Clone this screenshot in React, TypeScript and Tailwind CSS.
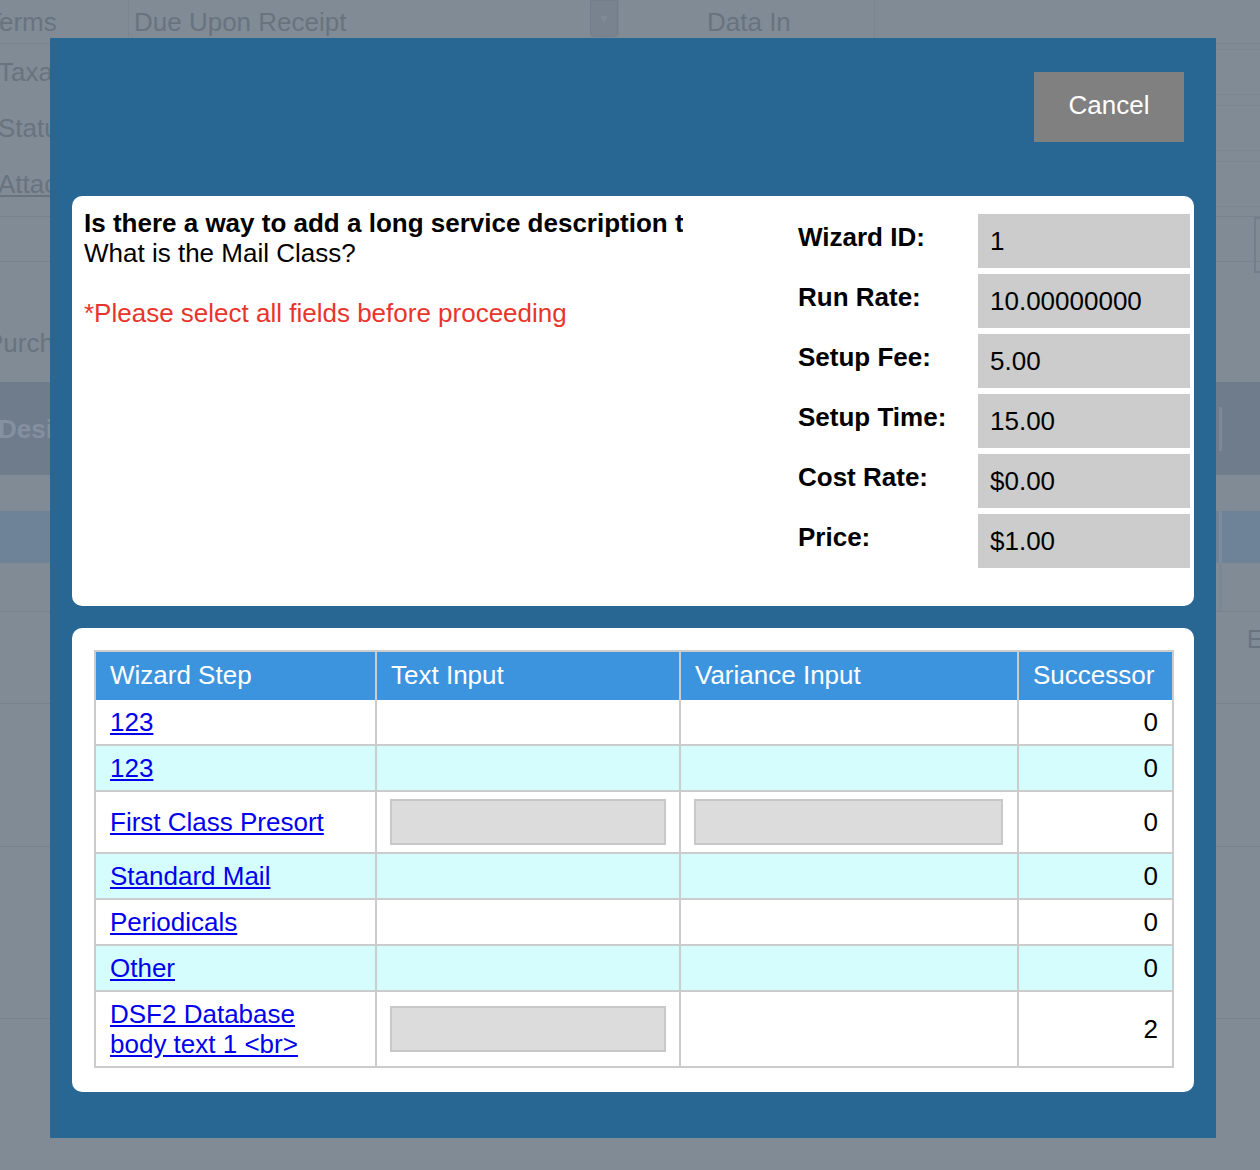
import React from "react";

const fields: [string, string][] = [
  ["Wizard ID:", "1"],
  ["Run Rate:", "10.00000000"],
  ["Setup Fee:", "5.00"],
  ["Setup Time:", "15.00"],
  ["Cost Rate:", "$0.00"],
  ["Price:", "$1.00"],
];

type Row = { step: string[]; text: boolean; variance: boolean; succ: string; cyan: boolean };

const rows: Row[] = [
  { step: ["123"], text: false, variance: false, succ: "0", cyan: false },
  { step: ["123"], text: false, variance: false, succ: "0", cyan: true },
  { step: ["First Class Presort"], text: true, variance: true, succ: "0", cyan: false },
  { step: ["Standard Mail"], text: false, variance: false, succ: "0", cyan: true },
  { step: ["Periodicals"], text: false, variance: false, succ: "0", cyan: false },
  { step: ["Other"], text: false, variance: false, succ: "0", cyan: true },
  { step: ["DSF2 Database", "body text 1 <br>"], text: true, variance: false, succ: "2", cyan: false },
];

function GrayInput() {
  return <div className="h-[46px] w-full bg-[#dcdcdc] border-2 border-[#c8c8c8]" />;
}

function Background() {
  return (
    <div className="flex flex-col text-[26px] leading-[30px] text-[#69737e]">
      <div className="h-[44px] flex items-stretch border-b border-[#7a8590]">
        <div className="w-[142px] flex items-center -ml-[14px]">Terms</div>
        <div className="w-[490px] flex items-stretch border-l border-[#7a8590]">
          <span className="flex-1 pl-[5px] flex items-center">Due Upon Receipt</span>
          <div className="w-[28px] h-[37px] bg-[#78838f] rounded-b-[4px] border border-[#737e8a] flex items-start justify-center pt-[12px] text-[12px] leading-[12px] text-[#808b96]">▼</div>
        </div>
        <div className="w-[257px] border-x border-[#7a8590] flex items-center pl-[88px]">Data In</div>
        <div className="flex-1" />
      </div>
      {["Taxable", "Status", "Attachments"].map((t, i) => (
        <div key={t} className="h-[56px] flex items-center">
          <div className={"flex-1 -ml-[2px] " + (i === 2 ? "underline" : "")}>{t}</div>
          <div className="w-[300px] h-[46px] border-y border-[#7a8590]" />
        </div>
      ))}
      <div className="h-[4px]" />
      <div className="h-[46px] border-y border-[#77828d] flex justify-end">
        <div className="w-[6px] h-[56px] border-l-2 border-y-2 border-[#737e8a]" />
      </div>
      <div className="h-[120px] flex items-end pb-[24px]">
        <span className="-ml-[14px]">Purchase</span>
      </div>
      <div className="h-[93px] bg-[#6e7c8b] flex items-center text-[#8490a0] font-bold">
        <span className="flex-1 -ml-[2px]">Design</span>
        <div className="w-[3px] h-[44px] bg-[#7d8996] mr-[38px]" />
      </div>
      <div className="h-[36px]" />
      <div className="h-[52px] bg-[#6f8398] flex justify-end">
        <div className="w-[3px] h-full bg-[#7d8b9a] mr-[38px]" />
      </div>
      <div className="h-[49px] border-b border-[#77828d] flex justify-end">
        <div className="w-[3px] h-full bg-[#7b8794] mr-[38px]" />
      </div>
      <div className="h-[92px] border-b border-[#77828d] flex justify-end pt-[12px]">
        <span className="text-[#6a7480] mr-[-4px]">E</span>
      </div>
      <div className="h-[143px] border-b border-[#77828d]" />
      <div className="h-[172px] border-b border-[#77828d]" />
    </div>
  );
}

export default function App() {
  return (
    <div className="relative w-[1260px] h-[1170px] overflow-hidden bg-[#808b96] font-['Liberation_Sans',Arial,sans-serif]">
      <Background />
      <div className="absolute left-[50px] top-[38px] w-[1166px] h-[1100px] bg-[#286694] px-[22px] pt-[34px] flex flex-col text-[26px] leading-[30px]">
        <div className="flex justify-end pr-[10px]">
          <button className="w-[150px] h-[70px] bg-[#808080] text-white text-[26px] leading-[30px] pb-[4px]">Cancel</button>
        </div>
        <div className="mt-[54px] h-[410px] bg-white rounded-[10px] flex text-black">
          <div className="w-[611px] pl-[12px] pt-[12px] overflow-hidden">
            <div className="font-bold whitespace-nowrap">
              Is there a way to add a long service description to this wizard step?
            </div>
            <div>What is the Mail Class?</div>
            <div className="mt-[30px] text-[#e8352b] whitespace-nowrap">*Please select all fields before proceeding</div>
          </div>
          <div className="flex-1" />
          <div className="w-[392px] mr-[4px] pt-[18px] flex flex-col gap-[6px]">
            {fields.map(([l, v]) => (
              <div key={l} className="flex h-[54px]">
                <div className="w-[180px] pt-[8px] font-bold">{l}</div>
                <div className="flex-1 bg-[#cccccc] pl-[12px] flex items-center">{v}</div>
              </div>
            ))}
          </div>
        </div>
        <div className="mt-[22px] bg-white rounded-[10px] px-[22px] pt-[22px] pb-[24px]">
          <table className="w-[1078px] table-fixed border-collapse border-2 border-[#cccccc]">
            <colgroup>
              <col className="w-[281px]" />
              <col className="w-[304px]" />
              <col className="w-[338px]" />
              <col className="w-[155px]" />
            </colgroup>
            <thead>
              <tr className="bg-[#3d94de] text-white">
                <th className="border-x-2 border-t-2 border-[#cccccc] text-left font-normal px-[14px] pt-[8px] pb-[10px]">Wizard Step</th>
                <th className="border-x-2 border-t-2 border-[#cccccc] text-left font-normal px-[14px] pt-[8px] pb-[10px]">Text Input</th>
                <th className="border-x-2 border-t-2 border-[#cccccc] text-left font-normal px-[14px] pt-[8px] pb-[10px]">Variance Input</th>
                <th className="border-x-2 border-t-2 border-[#cccccc] text-left font-normal px-[14px] pt-[8px] pb-[10px]">Successor</th>
              </tr>
            </thead>
            <tbody>
              {rows.map((r, i) => (
                <tr key={i} className={r.cyan ? "bg-[#d5fdfd]" : "bg-white"}>
                  <td className="border-x-2 border-b-2 border-[#cccccc] px-[14px] py-[7px] align-middle">
                    <a href="#" className="text-[#0000ee] underline">
                      {r.step.map((s, j) => (
                        <React.Fragment key={j}>
                          {j > 0 && <br />}
                          {s}
                        </React.Fragment>
                      ))}
                    </a>
                  </td>
                  <td className="border-x-2 border-b-2 border-[#cccccc] px-[13px] py-[7px] align-middle">
                    {r.text && <GrayInput />}
                  </td>
                  <td className="border-x-2 border-b-2 border-[#cccccc] pl-[13px] pr-[14px] py-[7px] align-middle">
                    {r.variance && <GrayInput />}
                  </td>
                  <td className="border-x-2 border-b-2 border-[#cccccc] px-[14px] py-[7px] text-right align-middle text-black">
                    {r.succ}
                  </td>
                </tr>
              ))}
            </tbody>
          </table>
        </div>
      </div>
    </div>
  );
}
